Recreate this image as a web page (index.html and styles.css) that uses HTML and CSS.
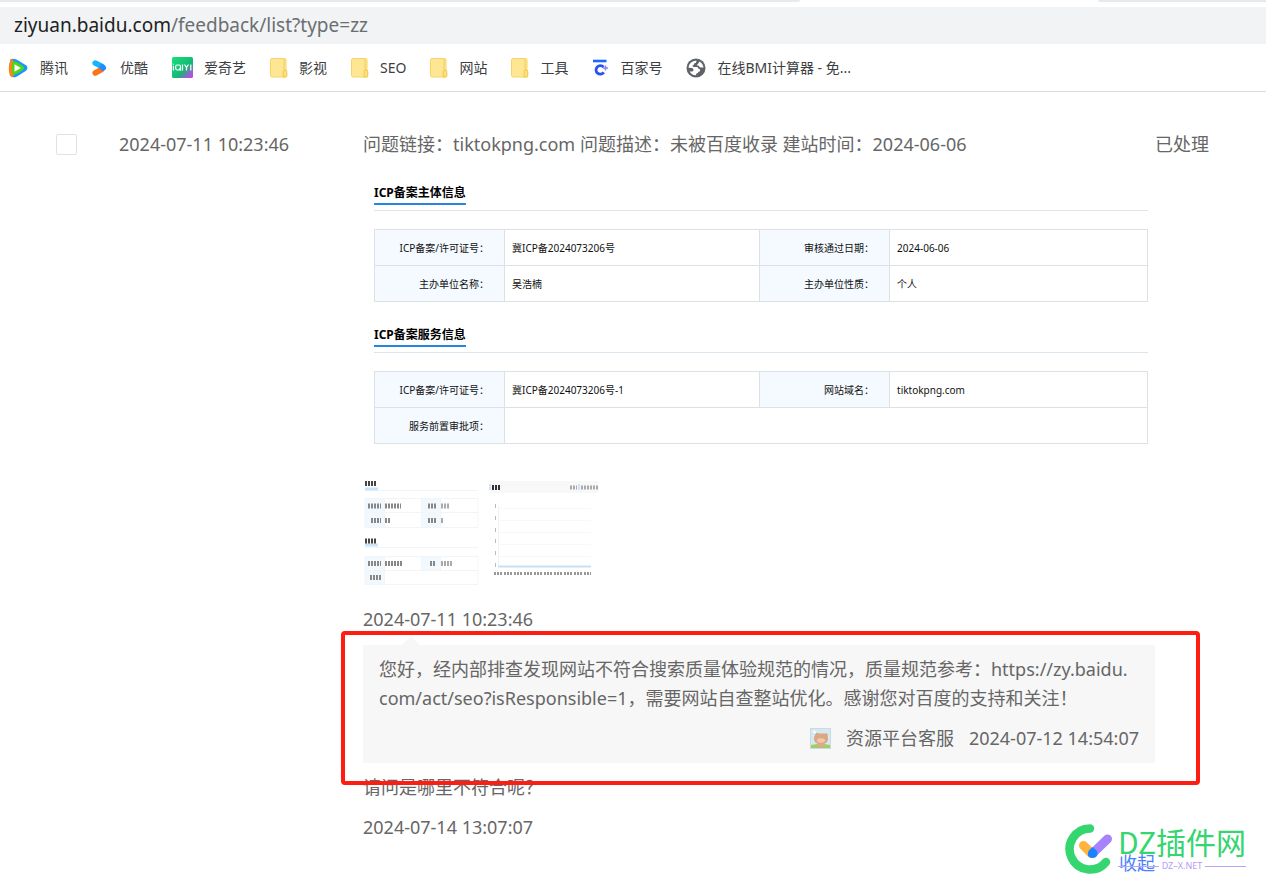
FILE: index.html
```html
<!DOCTYPE html>
<html lang="zh-CN">
<head>
<meta charset="utf-8">
<title>反馈列表</title>
<link rel="stylesheet" href="styles.css">
</head>
<body>
<svg class="defs" aria-hidden="true">
  <defs>
    <symbol id="folder" viewBox="0 0 18 20">
      <rect x="0.5" y="0.5" width="15.5" height="18.5" rx="1.5" fill="#ffe693" stroke="#f6d566"/>
      <path d="M14 1v11" stroke="#f3cf5a" stroke-width="1"/>
      <path d="M13.2 19v-5.2q0-1.6 1.8-1.6t1.8 1.6V18q0 1-1 1z" fill="#ffe280" stroke="#efc545"/>
    </symbol>
  </defs>
</svg>
<header class="browser">
  <div class="tabs"><span class="tab-strip"></span><span class="tab-active"></span><span class="tab-rest"></span></div>
  <div class="address"><span class="host">ziyuan.baidu.com</span><span>/feedback/list?type=zz</span></div>
  <nav class="bookmarks">
    <a class="bookmark tencent" href="#">
      <svg width="21" height="20" viewBox="0 0 21 20"><path d="M2.5 1.2Q5 .2 9 1.8l9 5.4q2.800 2.600 0 5.600L9 18.400Q5 20 3 18.600Q.3 10 2.500 1.200z" fill="#1798ff"/><path d="M2.800 1.200Q-.6 9 1.800 17.600L5 19.200 7 13 5 1.200z" fill="#ff8217"/><path d="M4.500 3.800Q8 3 11.500 5.800l4 2.800q1 1.300 0 2.600-4 3.800-8.500 5.300-1.800.6-2.500-.4-1.500-6 0-12.300z" fill="#4fd715"/><path d="M6.500 6.300l6.300 3.700-6.300 3.700z" fill="#fff"/></svg>
      腾讯</a>
    <a class="bookmark youku" href="#">
      <svg width="15" height="18" viewBox="0 0 15 18"><path d="M3.200 14L9.500 10.500" stroke="#ff7314" stroke-width="5.500" stroke-linecap="round"/><path d="M3.200 4L10 7.500" stroke="#12b5ff" stroke-width="5.500" stroke-linecap="round"/><path d="M9.500 4.400L13 6.500q2.500 2.300 0 4.600l-2 1.200L7 8.800z" fill="#2589ff"/></svg>
      优酷</a>
    <a class="bookmark iqiyi" href="#">
      <svg width="21" height="21" viewBox="0 0 21 21"><defs><linearGradient id="qy" x1="0" y1="0" x2="1" y2="1"><stop offset="0" stop-color="#18e07b"/><stop offset=".6" stop-color="#13b875"/><stop offset=".8" stop-color="#8a6bc8"/><stop offset="1" stop-color="#d33cf0"/></linearGradient></defs><rect width="21" height="21" rx="1.500" fill="url(#qy)"/><g fill="none" stroke="#fff" stroke-width="1.200"><path d="M1.400 9v4.500M1.400 6.800v1M10.500 7.500v6M12.500 7.500l2 3v3M16.500 7.500l-2 3M18.800 7.500v6"/><rect x="3.700" y="8" width="4.800" height="5" rx="1.500"/><path d="M7 11.500l2 2"/></g></svg>
      爱奇艺</a>
    <a class="bookmark" href="#"><svg width="18" height="20"><use href="#folder"/></svg>影视</a>
    <a class="bookmark" href="#"><svg width="18" height="20"><use href="#folder"/></svg>SEO</a>
    <a class="bookmark" href="#"><svg width="18" height="20"><use href="#folder"/></svg>网站</a>
    <a class="bookmark" href="#"><svg width="18" height="20"><use href="#folder"/></svg>工具</a>
    <a class="bookmark baijia" href="#">
      <svg width="17" height="17" viewBox="0 0 17 17"><path d="M1 2h13.500" stroke="#1c68ff" stroke-width="2.600"/><path d="M11.800 13.400A4.300 4.300 0 1 1 11.500 8" fill="none" stroke="#2b52ee" stroke-width="2.800"/><path d="M13.500 6.500v5M11 9h5" stroke="#8a80ff" stroke-width="1.500"/></svg>
      百家号</a>
    <a class="bookmark" href="#">
      <svg width="20" height="20" viewBox="0 0 20 20"><circle cx="10" cy="10" r="9.500" fill="#5f6368"/><path d="M10.500 2.600L10.200 4q-.2 1.200-1.800 1.300-.4 2-1.800 2.200-.2 1.500 1.200 1.500h3q1.500.2 1.700 1.800 1.700.1 1.700 1.400-.1 1.500-1.700 1.600-.4 1.500-2 1.700l-.6 1.800Q5.500 17 3.600 13.500h2.600q1.400-.3 1.300-1.700-.1-1.600-1.700-1.700l-3.300-.3Q3 3.500 10.500 2.600z" fill="#fff"/><path d="M13.500 3.500q3.500 2 4 6h-2.800q-1.700-.3-1.700-1.800l-2-.3q-.2-1.300 1-1.500z" fill="#fff"/></svg>
      在线BMI计算器 - 免...</a>
  </nav>
</header>
<main class="feedback">
  <input class="pick" type="checkbox" aria-label="选择">
  <time class="created">2024-07-11 10:23:46</time>
  <section class="thread">
    <p class="message">问题链接：tiktokpng.com 问题描述：未被百度收录 建站时间：2024-06-06</p>
    <div class="record">
      <h2 class="record-title"><span>ICP备案主体信息</span></h2>
      <table class="info">
        <colgroup><col class="label"><col class="value"><col class="label"><col class="value-last"></colgroup>
        <tbody>
        <tr><th scope="row">ICP备案/许可证号：</th><td>冀ICP备2024073206号</td><th scope="row">审核通过日期：</th><td>2024-06-06</td></tr>
        <tr><th scope="row">主办单位名称：</th><td>吴浩楠</td><th scope="row">主办单位性质：</th><td>个人</td></tr>
        </tbody>
      </table>
      <h2 class="record-title"><span>ICP备案服务信息</span></h2>
      <table class="info">
        <colgroup><col class="label"><col class="value"><col class="label"><col class="value-last"></colgroup>
        <tbody>
        <tr><th scope="row">ICP备案/许可证号：</th><td>冀ICP备2024073206号-1</td><th scope="row">网站域名：</th><td>tiktokpng.com</td></tr>
        <tr><th scope="row">服务前置审批项：</th><td colspan="3"></td></tr>
        </tbody>
      </table>
    </div>
    <div class="thumbs">
      <svg width="115" height="112" viewBox="0 0 115 112">
        <defs><filter id="soft"><feGaussianBlur stdDeviation="0.7 0.5"/></filter></defs>
        <g fill="#f2f9fe"><rect x="1" y="20" width="19" height="30"/><rect x="58" y="20" width="18" height="30"/><rect x="1" y="78" width="19" height="29"/><rect x="58" y="78" width="18" height="14"/></g>
        <path d="M1 12.500h113M1 20.500h113v29H1zM1 34.500h113M1 69.500h113M1 78.500h113v28H1zM1 92.500h113M20.500 20v30M57.500 20v30M76.500 20v30M20.500 78v29M57.500 78v14M76.500 78v14" fill="none" stroke="#f1f5f8"/>
        <path d="M1 11h13M1 67h13" stroke="#c8e4f8" stroke-width="3"/>
        <g filter="url(#soft)" fill="none" stroke-width="5" stroke-dasharray="2 1"><path d="M1 5.500h12M1 63h12" stroke="#444"/><path d="M4 28h13M7 42.500h10M64 28h9M64 42.500h9M4 85.500h13M66 85.500h6M6 99.500h11M21 28h16M21 42.500h5M21 85.500h18" stroke="#888"/><path d="M77 28h9M77 42.500h3M77 85.500h11" stroke="#aaa"/></g>
      </svg>
      <svg width="115" height="112" viewBox="0 0 115 112">
        <rect x="1" y="3" width="109" height="12" fill="#f8f8f8"/><path d="M1 6v6M90 6v6" stroke="#a8c8f6"/>
        <path d="M10 30.500h92M10 42.500h92M10 54.500h92M10 66.500h92M10 78.500h92" stroke="#f8f8f8"/>
        <path d="M9.500 28v60" stroke="#f2f2f2"/><path d="M9 88.500h93" stroke="#c8e0f4" stroke-width="2"/>
        <g filter="url(#soft)"><path d="M3 9.500h8" stroke="#333" stroke-width="5" stroke-dasharray="2 1"/><path d="M81 9.500h7M92 9.500h17" stroke="#aaa" stroke-width="4" stroke-dasharray="2 1"/>
        <path d="M6.500 26v4M6.500 38v4M6.500 50v4M6.500 61v4M6.500 73v4M6.500 85v4" stroke="#bbb"/><path d="M5 95.500h97" stroke="#999" stroke-width="3" stroke-dasharray="2 1 2 1 2 2"/></g>
      </svg>
    </div>
    <time class="stamp">2024-07-11 10:23:46</time>
    <article class="reply">
      <p class="reply-text">您好，经内部排查发现网站不符合搜索质量体验规范的情况，质量规范参考：https://zy.baidu.<wbr>com/act/seo?isResponsible=1，需要网站自查整站优化。感谢您对百度的支持和关注！</p>
      <footer class="reply-by">
        <svg width="21" height="21" viewBox="0 0 21 21"><rect x=".5" y=".5" width="20" height="20" fill="#d5e9f0" stroke="#c8dbe0"/><path d="M1 17q10-2 19 0v3H1z" fill="#9fcf60"/><circle cx="7" cy="6.500" r="1.800" fill="#d9a57f"/><circle cx="16" cy="7" r="1.800" fill="#d9a57f"/><rect x="4" y="5.500" width="14" height="10" rx="4.500" fill="#dca883"/><rect x="7" y="14" width="8" height="5" rx="2" fill="#dfa888"/><ellipse cx="11" cy="12.500" rx="4" ry="2.200" fill="#efc9aa"/><path d="M3 3l3 2" stroke="#fff" stroke-width="2"/></svg>
        <span>资源平台客服</span><time>2024-07-12 14:54:07</time>
      </footer>
      <div class="highlight"></div>
    </article>
    <p class="message">请问是哪里不符合呢？</p>
    <time class="stamp">2024-07-14 13:07:07</time>
    <a class="collapse" href="#">收起</a>
  </section>
  <span class="status">已处理</span>
</main>
<aside class="watermark">
  <svg width="48" height="52" viewBox="0 0 48 52"><path d="M25 6.500A20.500 20.500 0 1 0 41 40" fill="none" stroke="#35d56f" stroke-width="8.500" stroke-linecap="round"/><path d="M18.500 23.500l8 8" stroke="#ffb53b" stroke-width="9" stroke-linecap="round"/><path d="M28 31L42.500 17" stroke="#a682fd" stroke-width="9" stroke-linecap="round"/><path d="M23.500 29l4-4 4.500 4q2 7-4.500 7t-4-7z" fill="#1683ff"/></svg>
  <div class="brand"><span class="brand-name">DZ插件网</span><span class="brand-site">DZ–X.NET</span></div>
</aside>
</body>
</html>
```
FILE: styles.css
```css
* { box-sizing: border-box; }
body {
  position: relative;
  margin: 0;
  min-height: 100vh;
  background: #fff;
  color: #666;
  font: 18px/29px "Noto Sans", "Noto Sans CJK SC", sans-serif;
}
p, h2 { margin: 0; }
a { text-decoration: none; }
time { display: block; white-space: nowrap; }
svg { flex: none; }
.defs { position: absolute; width: 0; height: 0; }

.browser { border-bottom: 1px solid #dadce0; }
.tabs { display: flex; height: 7px; align-items: flex-start; }
.tab-strip { flex: 800; height: 2px; background: #e6eaed; border-bottom-right-radius: 4px; }
.tab-active { flex: 298; }
.tab-rest { flex: 168; height: 2px; background: #e6eaed; border-bottom-left-radius: 4px; }
.address {
  padding: 0 14px;
  background: #f1f3f4;
  color: #6b6f73;
  font-size: 19px;
  line-height: 37px;
}
.host { color: #202124; }
.bookmarks {
  display: flex;
  align-items: center;
  gap: 24px;
  height: 47px;
  padding-left: 8px;
  white-space: nowrap;
}
.bookmark {
  display: flex;
  align-items: center;
  gap: 11px;
  color: #3c4043;
  font-size: 14px;
  line-height: 20px;
}
.bookmark.youku { gap: 13px; }

.feedback {
  display: grid;
  grid-template-columns: 63px 244px minmax(0, 1fr) 55px;
  align-items: start;
  padding: 38px 56px 0;
}
.pick {
  appearance: none;
  width: 21px;
  height: 21px;
  margin: 4px 0;
  border: 1px solid #e2e2e2;
  border-radius: 2px;
  background: #fff;
}
.status { white-space: nowrap; }

.record {
  padding: 20px 7px 0 11px;
  color: #111;
  font-size: 10px;
  line-height: 16px;
}
.record-title {
  display: flex;
  height: 32px;
  padding-bottom: 5px;
  border-bottom: 1px solid #dce5ec;
  font-size: 12px;
  line-height: 27px;
  color: #000;
}
.record-title span { border-bottom: 2px solid #2486dd; }
.info {
  width: 100%;
  margin: 18px 0 19px;
  border-collapse: collapse;
  table-layout: fixed;
}
.label { width: 130px; }
.value { width: 33%; }
.info th, .info td {
  height: 36px;
  padding: 0 7px;
  border: 1px solid #dce1e5;
}
.info th {
  padding-right: 15px;
  background: #f4faff;
  font-weight: 400;
  text-align: right;
}
.info td { text-align: left; }

.thumbs { display: flex; gap: 10px; padding: 15px 0 15px 1px; }
.reply {
  position: relative;
  margin: 11px 0 10px;
  padding: 10px 16px;
  background: #f7f7f7;
}
.reply::before {
  content: "";
  position: absolute;
  left: 39px;
  top: -9px;
  border: 9px solid transparent;
  border-top-width: 0;
  border-bottom-color: #f7f7f7;
}
.reply-by {
  display: flex;
  justify-content: flex-end;
  align-items: center;
  gap: 15px;
  margin-top: 11px;
}
.highlight {
  position: absolute;
  inset: -14px -45px -22px -22px;
  border: 4px solid #ff1d12;
  border-radius: 4px;
}
.thread > .stamp + .collapse { margin-top: 7px; }
.message + .stamp { margin-top: 11px; }
.collapse { display: block; color: #4a80ff; text-align: right; }

.watermark {
  position: absolute;
  top: 822px;
  right: 20px;
  display: flex;
  gap: 5px;
  pointer-events: none;
}
.brand { display: grid; align-content: start; }
.brand-name {
  color: #35d56f;
  font-family: "Noto Sans CJK SC", sans-serif;
  font-size: 30px;
  line-height: 38px;
}
.brand-site {
  display: flex;
  align-items: center;
  gap: 3px;
  color: #b49bf8;
  font-size: 9px;
  line-height: 12px;
}
.brand-site::before, .brand-site::after {
  content: "";
  flex: 1;
  height: 1px;
  background: #bba5f9;
}
```
